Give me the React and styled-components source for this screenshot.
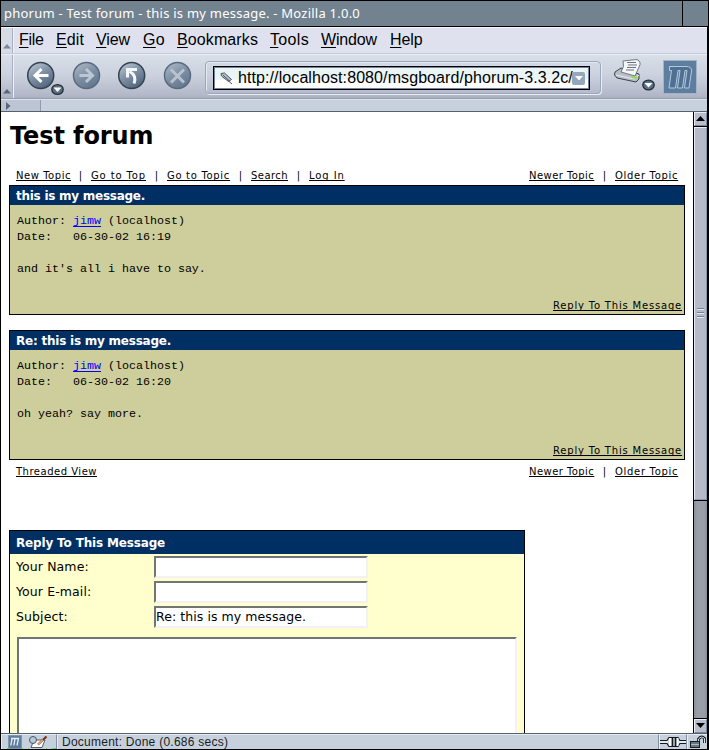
import React from 'react';
import styled, { createGlobalStyle, css } from 'styled-components';

const Global = createGlobalStyle`
  * { box-sizing: border-box; }
  html, body { margin: 0; padding: 0; overflow: hidden; background: #000; }
  svg { display: block; flex: none; }
`;

const sans = css`font-family: 'DejaVu Sans', Verdana, sans-serif;`;
const helv = css`font-family: 'Liberation Sans', Arial, sans-serif;`;

const Window = styled.div`
  width: 709px;
  height: 750px;
  padding: 1px 2px 1px 1px;
  background: #000;
  display: flex;
  flex-direction: column;
  overflow: hidden;
  white-space: nowrap;
`;
const TitleBar = styled.header`
  height: 25px;
  margin-bottom: 1px;
  margin-right: -1px;
  flex: none;
  display: flex;
  background: #73828f;
  color: #fff;
  font: 13px/25px 'Noto Sans', sans-serif;
  letter-spacing: 0.235px;
`;
const TitleText = styled.div`
  flex: 1;
  padding-left: 3px;
`;
const TitleButton = styled.div`
  width: 26px;
  border-left: 1px solid #000;
`;
const MenuRow = styled.div`
  height: 27px;
  flex: none;
  display: flex;
  background: #dfe2ee;
  border-top: 1px solid #f6f8fc;
  border-bottom: 1px solid #c3ccd8;
`;
const Grippy = styled.div`
  width: 12px;
  flex: none;
  display: flex;
  align-items: flex-end;
  justify-content: center;
  padding-bottom: ${(p) => p.$pad}px;
  background: ${(p) => p.$bg};
  border-right: 1px solid #a6b0c2;
  box-shadow: 1px 0 #eef1f7;
`;
const Menu = styled.nav`
  padding-left: 6px;
  display: grid;
  grid-template-columns: 37px 40px 47px 34px 93px 51px 69px 40px;
  ${helv}
  font-size: 16px;
  line-height: 24px;
  color: #000;
`;
const MenuItem = styled.div`
  letter-spacing: ${(p) => p.$ls}px;
  &::first-letter {
    text-decoration: underline;
    text-decoration-thickness: 1px;
    text-underline-offset: 2px;
  }
`;
const ToolRow = styled.div`
  height: 45px;
  flex: none;
  display: flex;
  border-top: 1px solid #eaeef4;
  border-bottom: 1px solid #929eb0;
  background: linear-gradient(#d9dfe8, #ccd2de 45%, #b4b9ca 92%, #aab0c3);
`;
const ToolIcons = styled.div`
  width: 192px;
  flex: none;
  display: flex;
  padding-left: 1px;
`;
const UrlFrame = styled.div`
  width: 396px;
  height: 33px;
  margin-top: 6px;
  padding: 4px 0 0 7px;
  border: 1px solid #9ba7ba;
  border-radius: 4px;
  box-shadow: 1px 1px #e8ecf3, inset 1px 1px #e4e8f0;
`;
const UrlField = styled.div`
  width: 377px;
  height: 24px;
  border: 1px solid #000;
  outline: 1px solid #71839a;
  outline-offset: -2px;
  background: linear-gradient(#eaf4f4 55%, #fff 60%);
  display: flex;
  align-items: center;
  padding: 0 4px 0 6px;
  ${helv}
  font-size: 16px;
  line-height: 22px;
  color: #000;
`;
const UrlText = styled.span`
  width: 334px;
  margin-left: 5px;
  letter-spacing: 0.09px;
`;
const DropButton = styled.span`
  width: 13px;
  height: 13px;
  margin-left: 0;
  border-radius: 2px;
  background: #96a6bc;
  display: flex;
  align-items: center;
  justify-content: center;
`;
const RightTools = styled.div`
  display: flex;
  padding-left: 9px;
`;
const TabStrip = styled.div`
  height: 13px;
  flex: none;
  background: #c6d1dd;
  border-bottom: 1px solid #56616f;
  border-top: 1px solid #dde4ec;
`;
const TabGrip = styled.div`
  width: 40px;
  height: 11px;
  padding-left: 5px;
  display: flex;
  align-items: center;
  background: #bcc5d4;
  border-right: 1px solid #8e9aae;
`;
const Body = styled.div`
  flex: 1;
  min-height: 0;
  display: flex;
  background: #fff;
`;
const Page = styled.main`
  flex: 1;
  padding-left: 8px;
  overflow: hidden;
  ${sans}
  color: #000;
`;
const Heading = styled.h1`
  margin: 0;
  padding: 9px 0 0 1px;
  height: 55px;
  font-size: 24px;
  line-height: 30px;
  font-weight: bold;
  letter-spacing: -0.1px;
`;
const NavRow = styled.div`
  width: 676px;
  height: ${(p) => p.$h}px;
  padding: 1px 6px 0 7px;
  display: flex;
  justify-content: space-between;
  font-size: 10px;
  line-height: 16px;
`;
const NavGroup = styled.div`
  display: flex;
`;
const Link = styled.a`
  width: ${(p) => p.$w}px;
  font-size: 10px;
  letter-spacing: ${(p) => p.$ls}px;
  text-decoration: underline;
  text-decoration-thickness: 1px;
  text-underline-offset: 1px;
  text-decoration-skip-ink: none;
`;
const Bar = styled.span`
  width: 19px;
  margin-right: 1px;
  text-align: center;
`;
const Message = styled.article`
  width: 676px;
  height: 130px;
  margin-bottom: ${(p) => p.$gap}px;
  border: 1px solid #000;
  background: #cece9c;
  display: flex;
  flex-direction: column;
`;
const BoxTitle = styled.div`
  height: ${(p) => p.$h}px;
  flex: none;
  padding: 1px 0 0 6px;
  background: #003063;
  color: #fff;
  font-size: 12px;
  font-weight: bold;
  line-height: ${(p) => p.$h}px;
  letter-spacing: ${(p) => p.$ls}px;
`;
const MessageText = styled.div`
  flex: 1;
  padding: 8px 0 0 7px;
  display: flex;
  flex-direction: column;
  font: 11.667px/16px 'Liberation Mono', 'Courier New', monospace;
`;
const Line = styled.div`
  height: 16px;
  display: flex;
  margin-top: ${(p) => (p.$apart ? 16 : 0)}px;
`;
const LineLabel = styled.span`
  width: 56px;
`;
const Author = styled.a`
  width: 35px;
  color: #00f;
  text-decoration: underline;
  text-decoration-thickness: 1px;
  text-underline-offset: 2px;
  text-decoration-skip-ink: none;
`;
const MessageFoot = styled.div`
  height: 16px;
  padding-right: 1px;
  display: flex;
  justify-content: flex-end;
  line-height: 16px;
`;
const ReplyForm = styled.section`
  width: 516px;
  height: 220px;
  border: 1px solid #000;
  border-bottom: 0;
  background: #ffffce;
`;
const Field = styled.label`
  height: 25px;
  padding: 2px 0 0 6px;
  display: flex;
  font-size: 12.5px;
  line-height: 21px;
`;
const FieldName = styled.span`
  width: 138px;
  letter-spacing: 0.1px;
`;
const sunken = css`
  border: 2px solid;
  border-color: #6f7673 #f4f0f5 #f4f0f5 #6f7673;
  background: #fff;
`;
const FieldBox = styled.span`
  ${sunken}
  width: 214px;
  height: 22px;
  line-height: 17px;
  letter-spacing: 0.07px;
`;
const TextArea = styled.div`
  ${sunken}
  width: 500px;
  height: 120px;
  margin: 8px 0 0 7px;
`;
const Scrollbar = styled.div`
  width: 14px;
  flex: none;
  border-left: 1px solid #000;
  display: flex;
  flex-direction: column;
  background: linear-gradient(90deg, #8a909c, #9a9ea8 25%, #999da7 80%, #868c99);
`;
const ScrollButton = styled.div`
  height: 14px;
  flex: none;
  display: flex;
  align-items: center;
  justify-content: center;
  background: #b9bdcc;
  border: 1px solid;
  border-color: #eceef5 #7788a0 #7788a0 #eceef5;
  box-shadow: 0 ${(p) => p.$edge}px #000;
`;
const Thumb = styled.div`
  height: 373px;
  margin: 1px 0 auto;
  display: flex;
  align-items: center;
  justify-content: center;
  background: #b5b9c8;
  border: 1px solid;
  border-color: #e8ebf3 #8597ad #8597ad #e8ebf3;
  box-shadow: 0 1px #000;
`;
const StatusBar = styled.footer`
  height: 16px;
  flex: none;
  border-top: 1px solid #56626c;
  display: flex;
  background: #c6d1dd;
`;
const StatusCell = styled.div`
  width: ${(p) => p.$w}px;
  flex: none;
  overflow: hidden;
  border-top: 1px solid #e5ebf1;
  border-right: 1px solid #8290a2;
  box-shadow: inset 1px 0 #e9eef3;
  padding-left: ${(p) => p.$pad || 0}px;
  ${helv}
  font-size: 12px;
  line-height: 15px;
  letter-spacing: 0.25px;
  color: #1a1e24;
  &:last-child { border-right: 0; }
`;

const Tri = ({ dir = 'up', size = 8, color = '#7d889b' }) => {
  const d = { up: 'M0 4.5 4 0 8 4.5Z', down: 'M0 0H8L4 4.5Z', right: 'M0 0 4.5 4 0 8Z' }[dir];
  const side = dir === 'right';
  return (
    <svg width={side ? size * 0.6 : size} height={side ? size : size * 0.6} viewBox={side ? '0 0 4.8 8' : '0 0 8 4.8'}>
      <path d={d} fill={color} />
    </svg>
  );
};

const NavIcons = () => (
  <svg width="191" height="43" viewBox="14 55 191 43">
    <defs>
      <linearGradient id="orb" x1="0.2" y1="0" x2="0.8" y2="1">
        <stop offset="0" stopColor="#b8c5d2" />
        <stop offset="0.45" stopColor="#7e90a4" />
        <stop offset="1" stopColor="#4b6078" />
      </linearGradient>
      <linearGradient id="orbOff" x1="0.2" y1="0" x2="0.8" y2="1">
        <stop offset="0" stopColor="#a9b6c5" />
        <stop offset="0.5" stopColor="#7d8ea3" />
        <stop offset="1" stopColor="#5f738b" />
      </linearGradient>
    </defs>
    <g strokeWidth="1.5">
      <circle cx="40.7" cy="75.5" r="13" fill="url(#orb)" stroke="#34434f" />
      <circle cx="86.5" cy="75.5" r="13" fill="url(#orbOff)" stroke="#586a7e" />
      <circle cx="131.7" cy="75.5" r="13" fill="url(#orb)" stroke="#34434f" />
      <circle cx="177.5" cy="75.5" r="13" fill="url(#orbOff)" stroke="#586a7e" />
    </g>
    <g fill="none" strokeWidth="3">
      <path d="M48.5 75.5H36M41.5 69 35 75.5 41.5 82" stroke="#fff" />
      <path d="M79.5 75.5H91M86 69 92.5 75.5 86 82" stroke="#bdc7d3" />
      <path d="M129.5 71.5C134.5 74 136 78 134 83.5" stroke="#f4f7fa" />
      <path d="M171 69.5 184 82.5M184 69.5 171 82.5" stroke="#b9c3d0" />
    </g>
    <path d="M126 68H137V71H129V77.5H126Z" fill="#f4f7fa" />
    <ellipse cx="57.5" cy="89.5" rx="5.7" ry="4.8" fill="#5d7083" stroke="#202c38" strokeWidth="1.3" />
    <path d="M53.5 87.5H61.5L57.5 92Z" fill="#fff" />
  </svg>
);

const PenIcon = () => (
  <svg width="13" height="13" viewBox="0 0 13 13">
    <path d="M1 1.5 4.5 1 11.5 7.5 8.500 9.5 1.5 4Z" fill="#b3c3cb" stroke="#4a5560" />
    <path d="M3 3 10 9.5M8.5 9 12 12" stroke="#4a5560" />
  </svg>
);

const PrintIcon = () => (
  <svg width="46" height="43" viewBox="610 55 46 43">
    <path d="M615 72 621 68 639 74 639 79 636 82 617 78Q613 75 615 72Z" fill="#b9bec6" stroke="#3b434d" />
    <path d="M616 75 634 79 639 75" fill="none" stroke="#e9edf1" />
    <path d="M621 72Q625 66 623 61L637 59.5Q642 62 639 67L635 76Z" fill="#f3f5f7" stroke="#555e69" strokeWidth="0.8" />
    <path d="M627 62.5H636M628 65H637M627 67.5H636M626 70H634" stroke="#68717c" />
    <path d="M632 77.5H637" stroke="#8fe03c" strokeWidth="2" />
    <ellipse cx="648.5" cy="85" rx="5.7" ry="4.8" fill="#5d7083" stroke="#202c38" strokeWidth="1.3" />
    <path d="M644.5 83H652.5L648.5 87.5Z" fill="#fff" />
  </svg>
);

const MozLogo = () => (
  <svg width="44" height="43" viewBox="656 55 44 43">
    <rect x="663.5" y="60.5" width="33" height="33" fill="#5e7e9f" stroke="#a2b4c7" />
    <path
      d="M669.5 66.500H686Q692 66.500 691.500 71L689 88H684.500L687 70.500H685L682.500 88H677.500L680 70.500H678L675.500 88H669L671.500 70.500H669.500Z"
      fill="#4f7092" stroke="#b4c9dc"
    />
  </svg>
);

const StatusIcons = () => (
  <svg width="55" height="14" viewBox="1 735 55 14">
    <rect x="8.5" y="735.5" width="13" height="13" fill="#5d7c9e" stroke="#8195ab" />
    <path d="M11 738.5H18.5L17 745.5M15 739 13.8 745.5M12 739 10.8 745.5" fill="none" stroke="#e6eef6" strokeWidth="1.3" />
    <path d="M34 740H45L42 747.5H31Z" fill="#fff" stroke="#333b44" strokeWidth="0.8" />
    <circle cx="33" cy="740" r="3.5" fill="#b7cad8" stroke="#44566b" />
    <path d="M38 744.5 46.5 736.5" stroke="#7b3020" strokeWidth="2.2" />
    <path d="M38 744.5 43 739.8" stroke="#e0b27a" strokeWidth="1.5" />
    <path d="M7 748.5H9M21 748.5H23M28 748.5H29M46 748.5H47M52 748.5H56" stroke="#52e052" />
  </svg>
);

const PlugIcon = () => (
  <svg width="26" height="14" viewBox="660 735 26 14">
    <path d="M660 740.500H667L669 737.500H678L680 740.500H686M660 743.500H667L669 746.500H678L680 743.500H686" fill="none" stroke="#15191e" strokeWidth="1.200" />
    <path d="M669 738H671V746H669ZM677 738H678.500V746H677Z" fill="#fff" />
    <path d="M672.500 738V746M675.500 738V746" stroke="#15191e" strokeWidth="1.500" />
    <path d="M660 742H668M679 742H686" stroke="#eef2f6" strokeWidth="1.500" />
  </svg>
);

const LockIcon = () => (
  <svg width="18" height="14" viewBox="688 735 18 14">
    <rect x="690.5" y="741.5" width="9" height="6" fill="#667684" stroke="#161c22" />
    <path d="M691 744.5H699" stroke="#aab8c4" />
    <path d="M698.5 741V739Q701.5 735 704.5 738.5V743" fill="none" stroke="#161c22" strokeWidth="2.8" />
    <path d="M698.5 741V739Q701.5 735.5 704.5 738.5V743" fill="none" stroke="#dbe3ea" />
  </svg>
);

const GripLines = () => (
  <svg width="7" height="11" viewBox="0 0 7 11">
    <path d="M0 1.5H7M0 5.5H7M0 9.5H7" stroke="#dfe9f0" />
    <path d="M0 .5H7M0 4.5H7M0 8.5H7" stroke="#71849c" />
  </svg>
);

const menus = [['File', -0.3], ['Edit', 0.1], ['View', -0.1], ['Go', 0.33], ['Bookmarks', 0.11], ['Tools', 0.33], ['Window', -0.15], ['Help', -0.1]];
const topics = [['New Topic', 0.54, 55], ['Go to Top', 0.87, 56], ['Go to Topic', 0.69, 64], ['Search', 0.44, 38], ['Log In', 0.9, 36]];
const paging = [['Newer Topic', 0.44, 66], ['Older Topic', 0.69, 64]];

const Links = ({ items }) => (
  <NavGroup>
    {items.map(([text, ls, w], i) => (
      <React.Fragment key={text}>
        {i > 0 && <Bar>|</Bar>}
        <Link $ls={ls} $w={w}>{text}</Link>
      </React.Fragment>
    ))}
  </NavGroup>
);

const Post = ({ title, time, text, ls, gap }) => (
  <Message $gap={gap}>
    <BoxTitle $h={19} $ls={ls}>{title}</BoxTitle>
    <MessageText>
      <Line><LineLabel>Author:</LineLabel><Author>jimw</Author><span>(localhost)</span></Line>
      <Line><LineLabel>Date:</LineLabel><span>06-30-02 {time}</span></Line>
      <Line $apart>{text}</Line>
    </MessageText>
    <MessageFoot><Link $ls={0.81} $w={130}>Reply To This Message</Link></MessageFoot>
  </Message>
);

export default function App() {
  return (
    <Window>
      <Global />
      <TitleBar>
        <TitleText>phorum - Test forum - this is my message. - Mozilla 1.0.0</TitleText>
        <TitleButton />
      </TitleBar>
      <MenuRow>
        <Grippy $pad={4} $bg="#d6dbe6"><Tri /></Grippy>
        <Menu>
          {menus.map(([m, ls]) => <MenuItem key={m} $ls={ls}>{m}</MenuItem>)}
        </Menu>
      </MenuRow>
      <ToolRow>
        <Grippy $pad={4} $bg="transparent"><Tri color="#5b6675" /></Grippy>
        <ToolIcons><NavIcons /></ToolIcons>
        <UrlFrame>
          <UrlField>
            <PenIcon />
            <UrlText>http://localhost:8080/msgboard/phorum-3.3.2c/</UrlText>
            <DropButton><Tri dir="down" color="#fff" /></DropButton>
          </UrlField>
        </UrlFrame>
        <RightTools><PrintIcon /><MozLogo /></RightTools>
      </ToolRow>
      <TabStrip><TabGrip><Tri dir="right" color="#5b6675" /></TabGrip></TabStrip>
      <Body>
        <Page>
          <Heading>Test forum</Heading>
          <NavRow $h={18}><Links items={topics} /><Links items={paging} /></NavRow>
          <Post title="this is my message." time="16:19" text="and it's all i have to say." ls={-0.26} gap={15} />
          <Post title="Re: this is my message." time="16:20" text="oh yeah? say more." ls={-0.23} gap={3} />
          <NavRow $h={67}><Links items={[['Threaded View', 0.51, 81]]} /><Links items={paging} /></NavRow>
          <ReplyForm>
            <BoxTitle $h={23} $ls={-0.16}>Reply To This Message</BoxTitle>
            <Field><FieldName>Your Name:</FieldName><FieldBox /></Field>
            <Field><FieldName>Your E-mail:</FieldName><FieldBox /></Field>
            <Field><FieldName>Subject:</FieldName><FieldBox>Re: this is my message.</FieldBox></Field>
            <TextArea />
          </ReplyForm>
        </Page>
        <Scrollbar>
          <ScrollButton $edge={1}><Tri color="#000" size={9} /></ScrollButton>
          <Thumb><GripLines /></Thumb>
          <ScrollButton $edge={-1}><Tri dir="down" color="#000" size={9} /></ScrollButton>
        </Scrollbar>
      </Body>
      <StatusBar>
        <StatusCell $w={56}><StatusIcons /></StatusCell>
        <StatusCell $w={602} $pad={5}>Document: Done (0.686 secs)</StatusCell>
        <StatusCell $w={28} $pad={1}><PlugIcon /></StatusCell>
        <StatusCell $w={20} $pad={1}><LockIcon /></StatusCell>
      </StatusBar>
    </Window>
  );
}
